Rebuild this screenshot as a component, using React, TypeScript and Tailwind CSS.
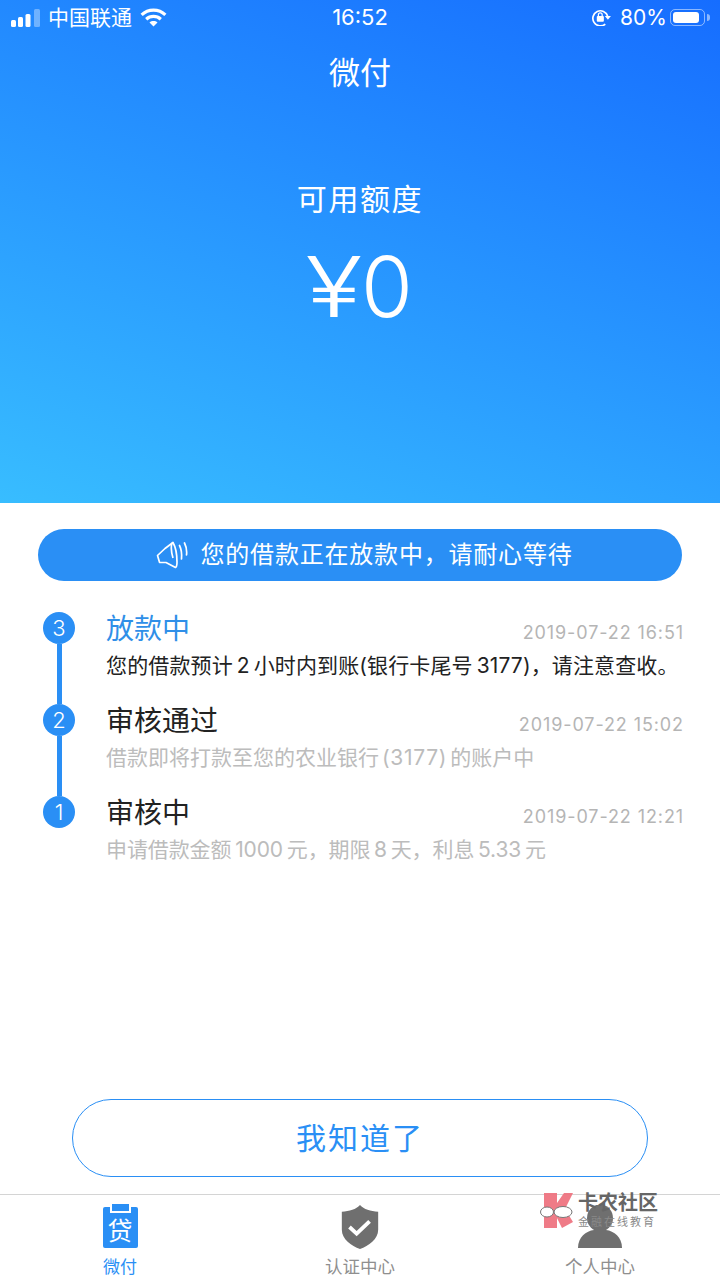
import type { ReactNode } from "react";

const FONT = "font-['Inter','Noto_Sans_CJK_SC',sans-serif]";

const steps: {
  no: number;
  title: string;
  time: string;
  desc: ReactNode;
  titleClass: string;
  descClass: string;
}[] = [
  {
    no: 3,
    title: "放款中",
    time: "2019-07-22 16:51",
    desc: <span className="tracking-[0.130px]">您的借款预计{"\u2009"}2{"\u2009"}小时内到账(银行卡尾号{"\u2009"}3177)，请注意查收。</span>,
    titleClass: "text-[#2f8fe8]",
    descClass: "text-[#222222]",
  },
  {
    no: 2,
    title: "审核通过",
    time: "2019-07-22 15:02",
    desc: (
      <>
        借款即将打款至您的农业银行<span className="px-[3px] tracking-[0.700px]">(3177)</span>的账户中
      </>
    ),
    titleClass: "text-[#222222]",
    descClass: "text-[#bcbcbc]",
  },
  {
    no: 1,
    title: "审核中",
    time: "2019-07-22 12:21",
    desc: <span className="tracking-[-0.100px]">申请借款金额{"\u2009"}1000{"\u2009"}元，期限{"\u2009"}8{"\u2009"}天，利息{"\u2009"}5.33{"\u2009"}元</span>,
    titleClass: "text-[#222222]",
    descClass: "text-[#bcbcbc]",
  },
];

function Signal() {
  return (
    <svg width="30" height="18" viewBox="0 0 30 18">
      <rect x="1" y="11" width="5" height="7" rx="1.500" fill="#fff" />
      <rect x="8" y="8" width="5" height="10" rx="1.500" fill="#fff" />
      <rect x="15.500" y="5" width="5" height="13" rx="1.500" fill="#fff" />
      <rect x="24" y="0" width="6" height="18" rx="1.500" fill="#fff" fillOpacity="0.35" />
    </svg>
  );
}

function Wifi() {
  return (
    <svg width="27" height="19" viewBox="0 0 28 20" fill="none" stroke="#fff" strokeWidth="3.400">
      <path d="M1.500 7.200C8.500 .6 19.500 .6 26.500 7.200" />
      <path d="M6.300 11.800C10.700 7.800 17.300 7.800 21.700 11.800" />
      <path d="M14 19.500L9.800 15.300C12.200 13.200 15.800 13.200 18.200 15.300Z" fill="#fff" stroke="none" />
    </svg>
  );
}

function RotationLock() {
  return (
    <svg width="19" height="17" viewBox="0 0 20 18" fill="none">
      <path d="M14 16A8 8 0 1 1 16.500 7.500" stroke="#fff" strokeWidth="1.800" />
      <path d="M13.500 7.500h6.500l-3.200 4z" fill="#fff" />
      <rect x="5" y="7.500" width="7.500" height="6" rx="1" fill="#fff" />
      <path d="M6.700 7.500V6a2 2 0 0 1 4 0v1.500" stroke="#fff" strokeWidth="1.300" />
    </svg>
  );
}

function Battery() {
  return (
    <div className="flex items-center">
      <div className="h-[17px] w-[35px] rounded-[5px] border border-white/50 p-[2px]">
        <div className="h-full w-[88%] rounded-[3px] bg-white" />
      </div>
      <div className="ml-[2px] h-[7px] w-[3px] rounded-r-sm bg-white/50" />
    </div>
  );
}

function Speaker() {
  return (
    <svg width="32" height="30" viewBox="0 0 32 30" fill="none" stroke="#fff" strokeWidth="1.700" strokeLinejoin="round">
      <path d="M1.500 15.500L9 8.500L17 2.500C19.500 7 21 14 21 22C21 25 20.500 27 19.500 27.500L10 22.500L3.500 22.300Z" />
      <path d="M17 2.500C14.500 3.500 15 12 17 18" />
      <path d="M23.500 5.500C25.500 9.500 26 13.500 25.500 19" strokeLinecap="round" />
      <path d="M28.500 3C30.500 7 31 11 30.500 15" strokeLinecap="round" />
    </svg>
  );
}

function Shield() {
  return (
    <svg width="38" height="44" viewBox="0 0 38 46">
      <path d="M19 0C23 4.500 30 6.500 38 7V26C38 36 28 43 19 46C10 43 0 36 0 26V7C8 6.500 15 4.500 19 0Z" fill="#6f6f6f" />
      <path d="M8 23L15.500 30L29 17" fill="none" stroke="#fff" strokeWidth="4" />
    </svg>
  );
}

function Person() {
  return (
    <svg width="44" height="44" viewBox="0 0 44 44" fill="#6f6f6f">
      <ellipse cx="22" cy="13" rx="13" ry="13.500" />
      <path d="M0 43C0 32 8 26 16 25H28C36 26 44 32 44 43Z" />
    </svg>
  );
}

function Watermark() {
  return (
    <div className="absolute left-[540px] top-[1192px] flex items-start">
      <svg width="36" height="38" viewBox="0 0 36 38">
        <path d="M4 1H17V11L24 1H33L25 17L33 30L22 36L17 26V36H4Z" fill="#ee7481" fillOpacity="0.95" />
        <ellipse cx="7" cy="20" rx="6.500" ry="5" fill="#fff" stroke="#777" strokeWidth="1" />
        <ellipse cx="23" cy="20" rx="9" ry="5.500" fill="#fff" stroke="#777" strokeWidth="1" />
      </svg>
      <div className="ml-[2px] flex flex-col">
        <span className="text-[20px] leading-[22px] font-bold text-[#666666]">卡农社区</span>
        <span className="text-[11px] leading-[16px] tracking-[2px] text-[#8a8a8a]">金融在线教育</span>
      </div>
    </div>
  );
}

export default function App() {
  return (
    <div className={`${FONT} relative flex h-[1280px] w-[720px] flex-col overflow-hidden bg-white`}>
      <section className="flex h-[503px] flex-col items-center bg-[linear-gradient(200deg,#166dff_0%,#38bdff_100%)] text-white">
        <div className="flex h-[35px] w-full items-center justify-between pl-[10px] pr-[10px] text-[21px]">
          <div className="flex w-[240px] items-center gap-[8px]">
            <Signal />
            <span>中国联通</span>
            <Wifi />
          </div>
          <span className="text-[22px]">16:52</span>
          <div className="flex w-[240px] items-center justify-end">
            <RotationLock />
            <span className="ml-[9px] mr-[3px]">80%</span>
            <Battery />
          </div>
        </div>
        <h1 className="mt-[16px] text-[31px] leading-[44px] font-normal">微付</h1>
        <p className="mt-[82px] text-[30px] leading-[44px] tracking-[1.600px]">可用额度</p>
        <p className="mt-[18px] flex text-[84px] leading-[96px] font-[350]">
          <span className="inline-block w-[54px] scale-x-125 text-center">¥</span>
          <span>0</span>
        </p>
      </section>

      <div className="mx-[38px] mt-[26px] flex h-[52px] items-center justify-center gap-[13px] rounded-full bg-[#2a8ff5] pl-[8px] text-[24px] tracking-[0.800px] text-white">
        <Speaker />
        <span>您的借款正在放款中，请耐心等待</span>
      </div>

      <ul className="mt-[31px] flex flex-col pl-[43px] pr-[36px]">
        {steps.map((step, i) => (
          <li key={step.no} className="flex h-[92px]">
            <div className="flex w-[32px] flex-col items-center">
              <span className="flex h-[32px] w-[32px] shrink-0 items-center justify-center rounded-full bg-[#2a8ff5] text-[22px] font-light text-white">
                {step.no}
              </span>
              {i < steps.length - 1 && <span className="w-[5px] flex-1 bg-[#2a8ff5]" />}
            </div>
            <div className="ml-[31px] min-w-0 flex-1">
              <div className="flex h-[34px] items-center justify-between">
                <span className={`text-[28px] ${step.titleClass}`}>{step.title}</span>
                <span className="mt-[7px] text-[18px] tracking-[0.900px] text-[#b5b5b5]">{step.time}</span>
              </div>
              <p className={`mt-[6px] whitespace-nowrap text-[21px] leading-[28px] ${step.descClass}`}>
                {step.desc}
              </p>
            </div>
          </li>
        ))}
      </ul>

      <button className="mx-[72px] mb-[17px] mt-auto flex h-[78px] items-center justify-center rounded-full border border-[#2a8ff5] text-[30px] tracking-[2px] text-[#2a8ff5]">
        我知道了
      </button>

      <nav className="grid h-[86px] grid-cols-3 border-t border-[#d4d4d4]">
        <div className="flex flex-col items-center pt-[12px] text-[#2a8ff5]">
          <div className="relative flex h-[41px] w-[35px] items-center justify-center rounded-[2px] bg-[#2a8ff5] pt-[8px] text-[25px] leading-none text-white">
            <span className="absolute -top-[3px] left-[7px] h-[9px] w-[21px] border-x-[2px] border-b-[2px] border-white bg-[#2a8ff5]" />
            贷
          </div>
          <span className="mt-[7px] text-[17px] leading-[24px]">微付</span>
        </div>
        <div className="flex flex-col items-center pt-[10px] text-[#8f8f8f]">
          <Shield />
          <span className="mt-[6px] text-[17.500px] leading-[24px]">认证中心</span>
        </div>
        <div className="flex flex-col items-center pt-[10px] text-[#8f8f8f]">
          <Person />
          <span className="mt-[6px] text-[17.500px] leading-[24px]">个人中心</span>
        </div>
      </nav>

      <Watermark />
    </div>
  );
}
